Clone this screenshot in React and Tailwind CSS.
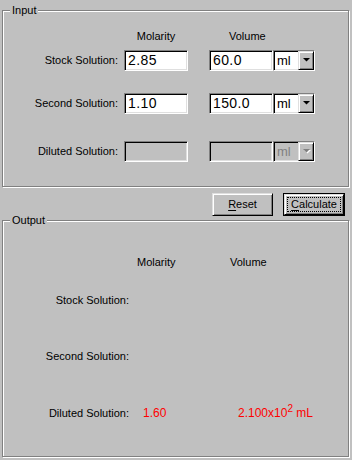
const font = { fontFamily: '"Liberation Sans", Arial, sans-serif' };

const sunken =
  "border border-t-[#808080] border-l-[#808080] border-b-white border-r-white shadow-[inset_1px_1px_0_#000,inset_-1px_-1px_0_#dfdfdf]";
const raised =
  "border border-t-[#dfdfdf] border-l-[#dfdfdf] border-b-black border-r-black shadow-[inset_1px_1px_0_#fff,inset_-1px_-1px_0_#808080]";
const groupBox =
  "relative ml-[2px] w-[347px] border border-[#808080] shadow-[inset_1px_1px_0_#fff,1px_1px_0_#fff]";

function GroupLabel({ children }) {
  return (
    <span className="absolute left-[7px] top-[-8px] bg-[#c0c0c0] px-[2px] text-[11px] leading-[14px] text-black">
      {children}
    </span>
  );
}

function TextBox({ value, disabled }) {
  return (
    <div
      className={`${sunken} flex h-[21px] w-[64px] items-center pl-[3px] text-[14px] tracking-[0.4px] ${
        disabled ? "bg-[#c0c0c0]" : "bg-white"
      }`}
    >
      {value}
    </div>
  );
}

function Arrow({ disabled }) {
  return (
    <svg width="7" height="5" viewBox="0 0 7 5" className="overflow-visible">
      {disabled && <path d="M1 1h7L4.5 4.5z" fill="#fff" />}
      <path d="M0 0h7L3.5 3.5z" fill={disabled ? "#808080" : "#000"} />
    </svg>
  );
}

function UnitSelect({ disabled }) {
  return (
    <div
      className={`${sunken} flex h-[21px] w-[42px] items-stretch ${disabled ? "bg-[#c0c0c0]" : "bg-white"}`}
    >
      <span
        className={`flex flex-1 items-center pl-[3px] text-[13px] ${disabled ? "text-[#808080]" : "text-black"}`}
      >
        ml
      </span>
      <span className={`${raised} flex w-[16px] items-center justify-center bg-[#c0c0c0]`}>
        <Arrow disabled={disabled} />
      </span>
    </div>
  );
}

function InputRow({ label, molarity, volume, disabled, className }) {
  return (
    <div className={`flex items-center ${className}`}>
      <span className="w-[115px] text-right text-[11px] leading-[13px]">{label}</span>
      <div className="ml-[6px]">
        <TextBox value={molarity} disabled={disabled} />
      </div>
      <div className="ml-[21px]">
        <TextBox value={volume} disabled={disabled} />
      </div>
      <UnitSelect disabled={disabled} />
    </div>
  );
}

function OutputRow({ label, molarity, volume, className }) {
  return (
    <div className={`flex items-center text-[11px] leading-[13px] ${className}`}>
      <span className="w-[126px] text-right">{label}</span>
      <span className="ml-[14px] w-[95px] text-[12px] text-[#ff0000]">{molarity}</span>
      <span className="text-[12px] text-[#ff0000]">{volume}</span>
    </div>
  );
}

export default function App() {
  return (
    <div className="h-[460px] w-[352px] overflow-hidden bg-[#c0c0c0] pt-[10px] text-black" style={font}>
      <div className={`${groupBox} h-[177px]`}>
        <GroupLabel>Input</GroupLabel>
        <div className="flex pt-[19px] text-[11px] leading-[13px]">
          <span className="w-[115px]" />
          <span className="ml-[6px] w-[64px] text-center">Molarity</span>
          <span className="ml-[21px] pl-[20px]">Volume</span>
        </div>
        <InputRow className="mt-[7px]" label="Stock Solution:" molarity="2.85" volume="60.0" />
        <InputRow className="mt-[22px]" label="Second Solution:" molarity="1.10" volume="150.0" />
        <InputRow className="mt-[27px]" label="Diluted Solution:" disabled />
      </div>

      <div className="mt-[6px] flex justify-end gap-[10px] pr-[7px] text-[11px]">
        <button className={`${raised} h-[23px] w-[61px] bg-[#c0c0c0]`}>
          <span className="underline underline-offset-2">R</span>eset
        </button>
        <button className="h-[23px] w-[62px] border border-black bg-[#c0c0c0]">
          <span className={`${raised} flex h-full w-full items-center justify-center p-[2px]`}>
            <span className="flex h-full w-full items-center justify-center border border-dotted border-black">
              <span className="underline underline-offset-2">C</span>alculate
            </span>
          </span>
        </button>
      </div>

      <div className={`${groupBox} mt-[4px] h-[237px]`}>
        <GroupLabel>Output</GroupLabel>
        <div className="flex pt-[35px] text-[11px] leading-[13px]">
          <span className="ml-[134px] w-[93px]">Molarity</span>
          <span>Volume</span>
        </div>
        <OutputRow className="mt-[25px]" label="Stock Solution:" />
        <OutputRow className="mt-[43px]" label="Second Solution:" />
        <OutputRow
          className="mt-[44px]"
          label="Diluted Solution:"
          molarity="1.60"
          volume={
            <>
              2.100x10<span className="relative top-[-5px] text-[10px] leading-none">2</span> mL
            </>
          }
        />
      </div>
    </div>
  );
}
